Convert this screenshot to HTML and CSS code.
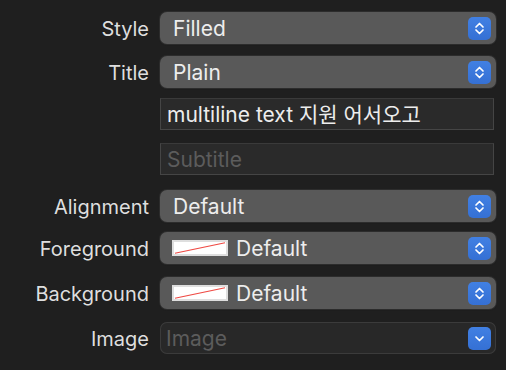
FILE: index.html
```html
<!DOCTYPE html>
<html lang="en">
<head>
  <meta charset="UTF-8">
  <title>Button Inspector</title>
  <link rel="stylesheet" href="styles.css">
</head>
<body>
  <div class="inspector">
    <div class="row">
      <div class="label">Style</div>
      <div class="popup">
        <span class="value">Filled</span>
        <span class="stepper">
          <svg viewBox="0 0 23 23"><polyline points="8,10 11.5,6.5 15,10"/><polyline points="8,13 11.5,16.5 15,13"/></svg>
        </span>
      </div>
    </div>
    <div class="row">
      <div class="label">Title</div>
      <div class="popup">
        <span class="value">Plain</span>
        <span class="stepper">
          <svg viewBox="0 0 23 23"><polyline points="8,10 11.5,6.5 15,10"/><polyline points="8,13 11.5,16.5 15,13"/></svg>
        </span>
      </div>
    </div>
    <div class="row gap-sm">
      <div class="label"></div>
      <div class="field">multiline text 지원 어서오고</div>
    </div>
    <div class="row gap-md">
      <div class="label"></div>
      <div class="field placeholder">Subtitle</div>
    </div>
    <div class="row gap-lg">
      <div class="label">Alignment</div>
      <div class="popup">
        <span class="value">Default</span>
        <span class="stepper">
          <svg viewBox="0 0 23 23"><polyline points="8,10 11.5,6.5 15,10"/><polyline points="8,13 11.5,16.5 15,13"/></svg>
        </span>
      </div>
    </div>
    <div class="row gap-sm">
      <div class="label">Foreground</div>
      <div class="popup">
        <span class="swatch"><svg viewBox="0 0 56 16" preserveAspectRatio="none"><line x1="1" y1="15" x2="55" y2="1"/></svg></span>
        <span class="value">Default</span>
        <span class="stepper">
          <svg viewBox="0 0 23 23"><polyline points="8,10 11.5,6.5 15,10"/><polyline points="8,13 11.5,16.5 15,13"/></svg>
        </span>
      </div>
    </div>
    <div class="row gap-md">
      <div class="label">Background</div>
      <div class="popup">
        <span class="swatch"><svg viewBox="0 0 56 16" preserveAspectRatio="none"><line x1="1" y1="15" x2="55" y2="1"/></svg></span>
        <span class="value">Default</span>
        <span class="stepper">
          <svg viewBox="0 0 23 23"><polyline points="8,10 11.5,6.5 15,10"/><polyline points="8,13 11.5,16.5 15,13"/></svg>
        </span>
      </div>
    </div>
    <div class="row gap-md">
      <div class="label">Image</div>
      <div class="popup disabled">
        <span class="value">Image</span>
        <span class="stepper">
          <svg viewBox="0 0 23 23"><polyline points="8,10 11.5,13.5 15,10"/></svg>
        </span>
      </div>
    </div>
  </div>
</body>
</html>
```

FILE: styles.css
```css
html, body {
  margin: 0; padding: 0;
  background: #1f1f1f;
  font-family: Inter, "Noto Sans", "Noto Sans CJK KR", sans-serif;
  width: 506px; height: 370px; overflow: hidden;
}
.inspector {
  padding-top: 12px;
  display: flex; flex-direction: column;
}
.row {
  display: flex; align-items: center;
  height: 32px; margin-top: 12px;
}
.row:first-child { margin-top: 0; }
.row.gap-sm { margin-top: 10px; }
.row.gap-md { margin-top: 13px; }
.row.gap-lg { margin-top: 15px; }
.label {
  width: 149px; text-align: right;
  color: #dedede; font-size: 20px;
  margin-right: 11px;
  flex-shrink: 0;
  padding-top: 1px;
}
.popup {
  width: 336px; height: 32px; box-sizing: border-box;
  background: #595959; border-radius: 7px;
  box-shadow: 0 0 0 1px #2c2c2c, 0 1px 1px #1a1a1a;
  display: flex; align-items: center;
  padding: 0 5px 0 13px;
}
.popup .value {
  flex: 1; color: #ededed; font-size: 21px;
  padding-top: 1px;
}
.stepper {
  width: 23px; height: 23px; border-radius: 5px;
  background: linear-gradient(180deg, #4180e3 0%, #3570d4 100%);
  display: flex;
}
.stepper svg { width: 23px; height: 23px; }
.stepper polyline {
  fill: none; stroke: #fff; stroke-width: 1.7;
  stroke-linecap: round; stroke-linejoin: round;
}
.swatch {
  width: 56px; height: 16px; box-sizing: border-box;
  background: #fff; border: 2px solid #dedede;
  margin-right: 8px; margin-left: -1px; display: flex;
}
.swatch svg { width: 100%; height: 100%; }
.swatch line { stroke: #ef4a44; stroke-width: 1.2; }
.popup.disabled {
  background: #282828;
  box-shadow: inset 0 0 0 1px #3b3b3b;
  padding-left: 6px;
}
.popup.disabled .value { color: #5c5c5c; }
.field {
  width: 334px; height: 32px; box-sizing: border-box;
  background: #2a2a2a; border: 1px solid #454545;
  border-top-color: #3a3a3a;
  color: #ededed; font-size: 21px;
  padding: 1px 6px 0; line-height: 30px;
}
.field.placeholder { color: #5c5c5c; }
```
